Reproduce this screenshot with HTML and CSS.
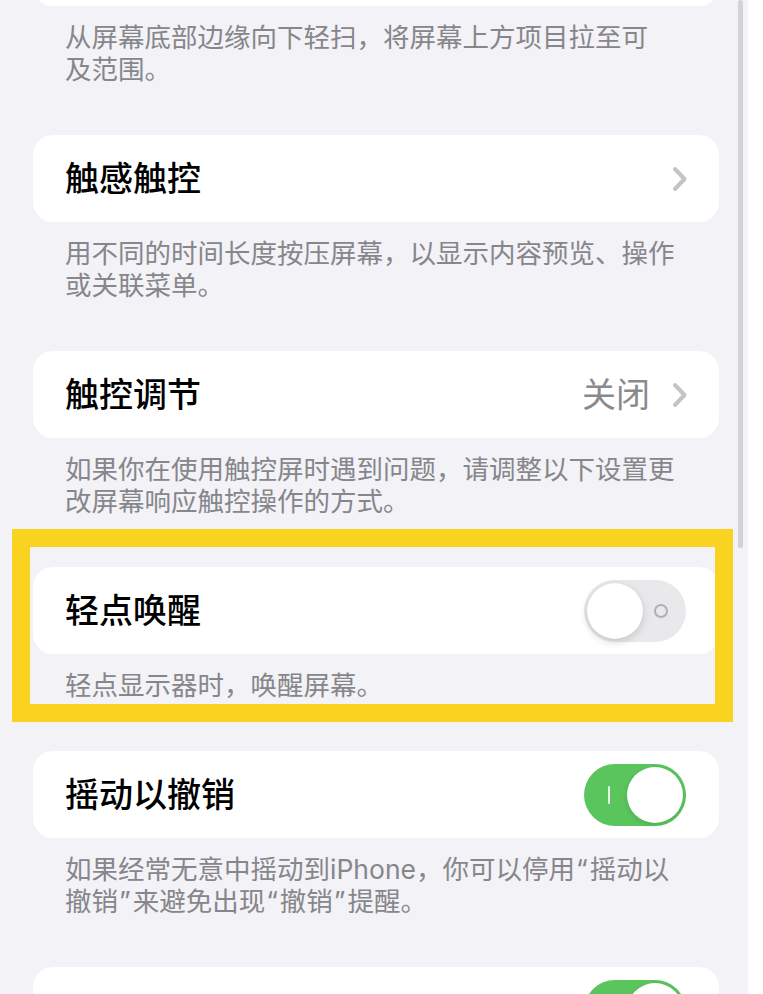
FILE: index.html
```html
<!DOCTYPE html>
<html lang="zh-CN">
<head>
<meta charset="utf-8">
<title>触控</title>
<link rel="stylesheet" href="styles.css">
</head>
<body>
<div class="screen">
  <div class="list">
    <section class="group">
      <div class="card"></div>
      <p class="note">从屏幕底部边缘向下轻扫，将屏幕上方项目拉至可<br>及范围。</p>
    </section>

    <section class="group">
      <div class="card"><span class="title">触感触控</span>
        <svg class="chevron" viewBox="0 0 16 26" width="16" height="26"><polyline points="3,3 12.5,13 3,23"/></svg>
      </div>
      <p class="note">用不同的时间长度按压屏幕，以显示内容预览、操作<br>或关联菜单。</p>
    </section>

    <section class="group">
      <div class="card"><span class="title">触控调节</span>
        <span class="value">关闭</span>
        <svg class="chevron" viewBox="0 0 16 26" width="16" height="26"><polyline points="3,3 12.5,13 3,23"/></svg>
      </div>
      <p class="note">如果你在使用触控屏时遇到问题，请调整以下设置更<br>改屏幕响应触控操作的方式。</p>
    </section>

    <section class="group">
      <div class="card"><span class="title">轻点唤醒</span>
        <div class="switch"><span class="knob"></span><span class="mark-off"></span></div>
      </div>
      <p class="note">轻点显示器时，唤醒屏幕。</p>
    </section>

    <section class="group">
      <div class="card"><span class="title">摇动以撤销</span>
        <div class="switch on"><span class="mark-on"></span><span class="knob"></span></div>
      </div>
      <p class="note">如果经常无意中摇动到iPhone，你可以停用<span class="q">“</span>摇动以<br>撤销<span class="q">”</span>来避免出现<span class="q">“</span>撤销<span class="q">”</span>提醒。</p>
    </section>

    <section class="group">
      <div class="card"><span class="title"></span>
        <div class="switch on"><span class="mark-on"></span><span class="knob"></span></div>
      </div>
    </section>
  </div>

  <div class="highlight"></div>
  <div class="scroll-thumb"></div>
</div>
</body>
</html>
```

FILE: styles.css
```css
html, body {
  margin: 0;
  padding: 0;
  background: #ffffff;
}

body {
  font-family: "Inter", "Noto Sans CJK SC", sans-serif;
  -webkit-font-smoothing: antialiased;
}

.screen {
  position: relative;
  width: 748px;
  height: 994px;
  overflow: hidden;
  background: #f2f2f7;
}

.list {
  display: flex;
  flex-direction: column;
  margin-top: -81px;
  padding: 0 29px 0 33px;
}

.group {
  display: flex;
  flex-direction: column;
}

.card {
  box-sizing: border-box;
  height: 87px;
  display: flex;
  align-items: center;
  padding: 0 33px 0 32px;
  background: #ffffff;
  border-radius: 20px;
}

.title {
  flex: 1;
  font-size: 34px;
  font-weight: 500;
  color: #000000;
  line-height: 40px;
}

.value {
  font-size: 34px;
  color: #8a8a8e;
  line-height: 40px;
  margin-right: 22px;
}

.chevron {
  display: block;
  margin-right: -2px;
}

.chevron polyline {
  fill: none;
  stroke: #c4c4c8;
  stroke-width: 4;
  stroke-linecap: round;
  stroke-linejoin: round;
}

.note {
  margin: 0;
  padding: 15px 32px 50px;
  font-size: 26.5px;
  line-height: 32px;
  color: #86868b;
  white-space: nowrap;
}

/* curly quotes sit a little wider than the Latin glyphs */
.note .q {
  letter-spacing: 2px;
  margin-left: 1px;
}

/* toggle switch */
.switch {
  position: relative;
  width: 102px;
  height: 62px;
  border-radius: 31px;
  background: #e9e9eb;
  flex: none;
}

.switch .knob {
  position: absolute;
  top: 3px;
  left: 3px;
  width: 56px;
  height: 56px;
  border-radius: 50%;
  background: #ffffff;
  box-shadow: 0 3px 8px rgba(0, 0, 0, 0.15), 0 0 1px rgba(0, 0, 0, 0.12);
}

.switch.on {
  background: #5ac55d;
}

.switch.on .knob {
  left: 43px;
  box-shadow: 0 2px 6px rgba(0, 0, 0, 0.12);
}

.mark-off {
  position: absolute;
  top: 24px;
  left: 70px;
  width: 10px;
  height: 10px;
  border: 2px solid #b0b0b4;
  border-radius: 50%;
}

.mark-on {
  position: absolute;
  top: 22px;
  left: 24px;
  width: 2px;
  height: 18px;
  border-radius: 1px;
  background: rgba(255, 255, 255, 0.85);
}

/* yellow annotation frame laid over the list */
.highlight {
  position: absolute;
  left: 12px;
  top: 529px;
  width: 721px;
  height: 193px;
  box-sizing: border-box;
  border: 18px solid #fad321;
  pointer-events: none;
}

.scroll-thumb {
  position: absolute;
  left: 738px;
  top: 0;
  width: 5px;
  height: 548px;
  border-radius: 3px;
  background: #d3d3d7;
}
```
